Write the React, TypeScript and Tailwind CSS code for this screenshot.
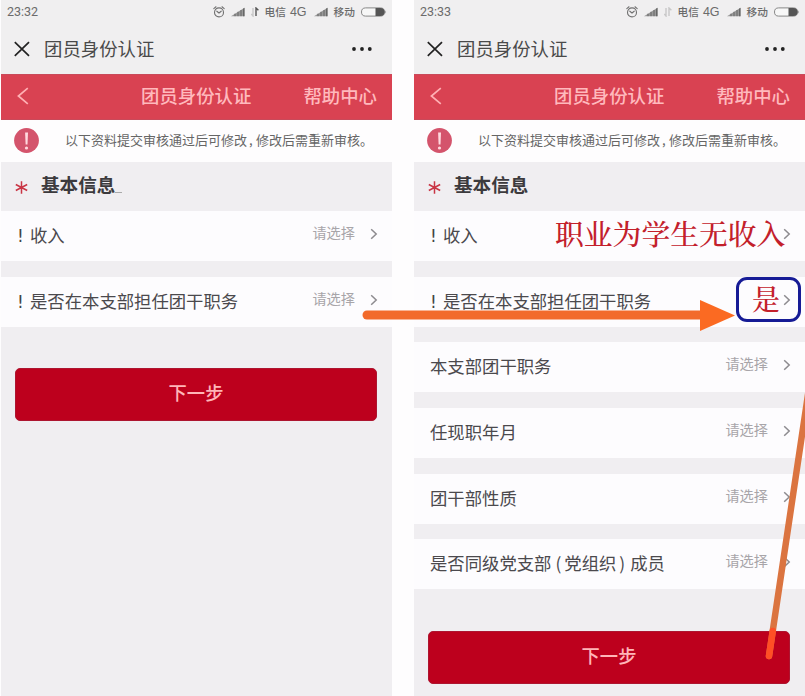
import clsx from "clsx";

type Field = {
  label: React.ReactNode;
  required?: boolean;
  value?: string;
};

type PhoneProps = {
  time: string;
  fields: Field[];
  cursor?: boolean;
  dimData?: boolean;
  className?: string;
};

const leftFields: Field[] = [
  { label: "收入", required: true, value: "请选择" },
  { label: "是否在本支部担任团干职务", required: true, value: "请选择" },
];

const rightFields: Field[] = [
  { label: "收入", required: true },
  { label: "是否在本支部担任团干职务", required: true },
  { label: "本支部团干职务", value: "请选择" },
  { label: "任现职年月", value: "请选择" },
  { label: "团干部性质", value: "请选择" },
  {
    label: (
      <>
        是否同级党支部<span className="ml-[4px] mr-[3px]">(</span>党组织<span className="ml-[3px] mr-[5px]">)</span>成员
      </>
    ),
    value: "请选择",
  },
];

function Signal() {
  return (
    <svg width="14" height="10" viewBox="0 0 14 10">
      <path d="M0 9.2 L13.5 .8 V9.2 Z" fill="#999" />
      <path d="M4 6.7V9.2M7 4.8V9.2M10 3V9.2" stroke="#666" strokeWidth="1" />
      <path d="M12 1.8 L13.5 .8 V9.2 H12Z" fill="#666" />
    </svg>
  );
}

function StatusBar({ time, dimData }: { time: string; dimData?: boolean }) {
  return (
    <div className="flex h-[24px] items-center justify-between pl-[6px] pr-[5px] text-[#6b6b6b]">
      <span className="font-['Roboto'] text-[12.5px]">{time}</span>
      <div className="flex items-center text-[10.7px] font-medium">
        <svg width="12" height="12" viewBox="0 0 12 12" fill="none" stroke="#707070" strokeWidth="1.1">
          <circle cx="6" cy="6.4" r="4.5" />
          <path d="M3.8 5.2 6 7 8.2 5.2M.8 2.6 3 .8M11.2 2.6 9 .8" strokeLinecap="round" />
        </svg>
        <div className="ml-[6px]">
          <Signal />
        </div>
        <svg width="8" height="10" viewBox="0 0 8 10" className="ml-[6px]" fill="none" strokeWidth="1.4">
          <path d="M2 1V9L.3 7" stroke="#c8c8c8" />
          <path d="M5 9V1L7.4 3.3" stroke={dimData ? "#c8c8c8" : "#555"} />
        </svg>
        <span className="ml-[6px]">电信</span>
        <span className="ml-[4px] font-['Liberation_Sans'] text-[12.5px] font-normal">4G</span>
        <div className="ml-[7px]">
          <Signal />
        </div>
        <span className="ml-[6px]">移动</span>
        <svg width="26" height="10" viewBox="0 0 26 10" className="ml-[6px]">
          <rect x=".5" y=".9" width="23" height="8.2" rx="4.1" fill="#f7f7f7" stroke="#888" />
          <path d="M14.5 1H19.5A4 4 0 0 1 19.5 9H14.5Z" fill="#555" />
          <path d="M24.3 3.2Q26 5 24.3 6.8Z" fill="#888" />
        </svg>
      </div>
    </div>
  );
}

function TitleBar() {
  return (
    <div className="flex h-[50px] items-center pl-[13px] pr-[20px] text-[#4a4a4a]">
      <svg width="16" height="16" viewBox="0 0 16 16" stroke="#222" strokeWidth="1.7">
        <path d="M.8 1.2 15 14.8M15 1.2.8 14.8" />
      </svg>
      <span className="ml-[14px] text-[18.4px]">团员身份认证</span>
      <svg width="20" height="4" viewBox="0 0 20 4" className="ml-auto" fill="#222">
        <circle cx="2" cy="2" r="1.9" />
        <circle cx="10" cy="2" r="1.9" />
        <circle cx="17.8" cy="2" r="1.9" />
      </svg>
    </div>
  );
}

function NavBar() {
  return (
    <div className="flex h-[46px] items-center border-y border-[#c94a5a] bg-[#d94252] pl-[16px] pr-[15px] pb-[2px] text-[18.4px] font-medium text-[#ffb9bd]">
      <svg width="12" height="18" viewBox="0 0 12 18" fill="none" stroke="#ffb0b4" strokeWidth="1.7">
        <path d="M10.8 1.2 1.4 9 10.8 16.8" />
      </svg>
      <span className="ml-[112px]">团员身份认证</span>
      <span className="ml-auto">帮助中心</span>
    </div>
  );
}

function Notice() {
  return (
    <div className="flex h-[42px] items-center bg-[#fefdfe] pb-[2px] pl-[13px]">
      <svg width="25" height="25" viewBox="0 0 25 25">
        <circle cx="12.5" cy="12.5" r="12.4" fill="#d4546c" />
        <path d="M11.1 4.5H14L13.5 16.5H11.6Z" fill="#ffd9df" />
        <circle cx="12.5" cy="20" r="1.6" fill="#ffd9df" />
      </svg>
      <span className="ml-[26px] text-[13px] text-[#666]">
        以下资料提交审核通过后可修改<span className="inline-block w-[9px] pl-[2px]">,</span>修改后需重新审核。
      </span>
    </div>
  );
}

function SectionTitle({ cursor }: { cursor?: boolean }) {
  return (
    <div className="flex h-[49px] items-center bg-[#f0eef1] pb-[5px] pl-[14px]">
      <svg width="13" height="13" viewBox="0 0 13 13" className="mt-[6px]" stroke="#c93545" strokeWidth="1.5">
        <path d="M6.5.3V12.7M.8 3.5 12.2 9.5M12.2 3.5.8 9.5" />
      </svg>
      <span className="ml-[13px] text-[18.6px] font-bold text-[#3c3a3d]">基本信息</span>
      {cursor && <span className="mt-[16px] h-px w-[7px] bg-[#aaa]" />}
    </div>
  );
}

function FieldRow({ label, required, value }: Field) {
  return (
    <div className="flex h-[50px] items-center bg-[#fdfcfe] pl-[16px] pr-[14px] pb-[2px]">
      {required && (
        <span className="mt-[3px] w-[13px] font-['DejaVu_Sans'] text-[17px] leading-none text-[#444]">!</span>
      )}
      <span className="whitespace-nowrap text-[17.35px] text-[#4b494d]">{label}</span>
      <span className="mb-[5px] ml-auto text-[14.2px] text-[#a8a5a9]">{value}</span>
      <svg width="8" height="12" viewBox="0 0 8 12" className="mb-[2px] ml-[15px]" fill="none" stroke="#8d8b8f" strokeWidth="1.5">
        <path d="M1.2 1.2 6.2 6 1.2 10.8" />
      </svg>
    </div>
  );
}

function Phone({ time, fields, cursor, dimData, className }: PhoneProps) {
  return (
    <div className={clsx("h-full shrink-0 bg-[#f0eef1]", className)}>
      <div className="bg-[#f0eff0]">
        <StatusBar time={time} dimData={dimData} />
        <TitleBar />
      </div>
      <NavBar />
      <Notice />
      <SectionTitle cursor={cursor} />
      <div className="flex flex-col gap-[15.7px]">
        {fields.map((f, i) => (
          <FieldRow key={i} {...f} />
        ))}
      </div>
      <div className="mt-[41.5px] pl-[14px] pr-[15px]">
        <button className="block h-[53px] w-full rounded-[5px] border border-[#ad1530] bg-[#bd001d] pb-[3px] text-[18.3px] font-medium text-[#ffb5b8]">
          下一步
        </button>
      </div>
    </div>
  );
}

export default function App() {
  return (
    <div className="relative flex h-[696px] w-[805px] justify-between overflow-hidden bg-[#fefdfe] pl-px font-['Noto_Sans_CJK_SC',sans-serif]">
      <Phone time="23:32" fields={leftFields} cursor className="w-[391px]" />
      <Phone time="23:33" fields={rightFields} dimData className="w-[391px]" />

      {/* red notes laid over the form */}
      <div className="absolute left-[555px] top-[213px] whitespace-nowrap font-['Noto_Serif_CJK_SC','Noto_Sans_CJK_SC',serif] text-[28.8px] font-medium leading-[40px] text-[#c3202b]">
        职业为学生无收入
      </div>
      <div className="absolute left-[736px] top-[277px] h-[45px] w-[65px] rounded-[11px] border-[3.5px] border-[#161b96]" />
      <div className="absolute left-[752px] top-[278px] font-['Noto_Serif_CJK_SC','Noto_Sans_CJK_SC',serif] text-[28px] font-medium leading-[40px] text-[#c3202b]">
        是
      </div>
      <svg width="805" height="696" viewBox="0 0 805 696" className="absolute inset-0">
        <path d="M367 315H702" stroke="#f26a2b" strokeWidth="9" strokeLinecap="round" />
        <path d="M700 300 735 315.5 700 331Z" fill="#fb6a22" />
        <path d="M809 388 769 656" stroke="#db7440" strokeWidth="6.5" strokeLinecap="round" />
        <path d="M772.8 631 769 656" stroke="#ff4f25" strokeWidth="6.5" strokeLinecap="round" />
      </svg>
    </div>
  );
}
